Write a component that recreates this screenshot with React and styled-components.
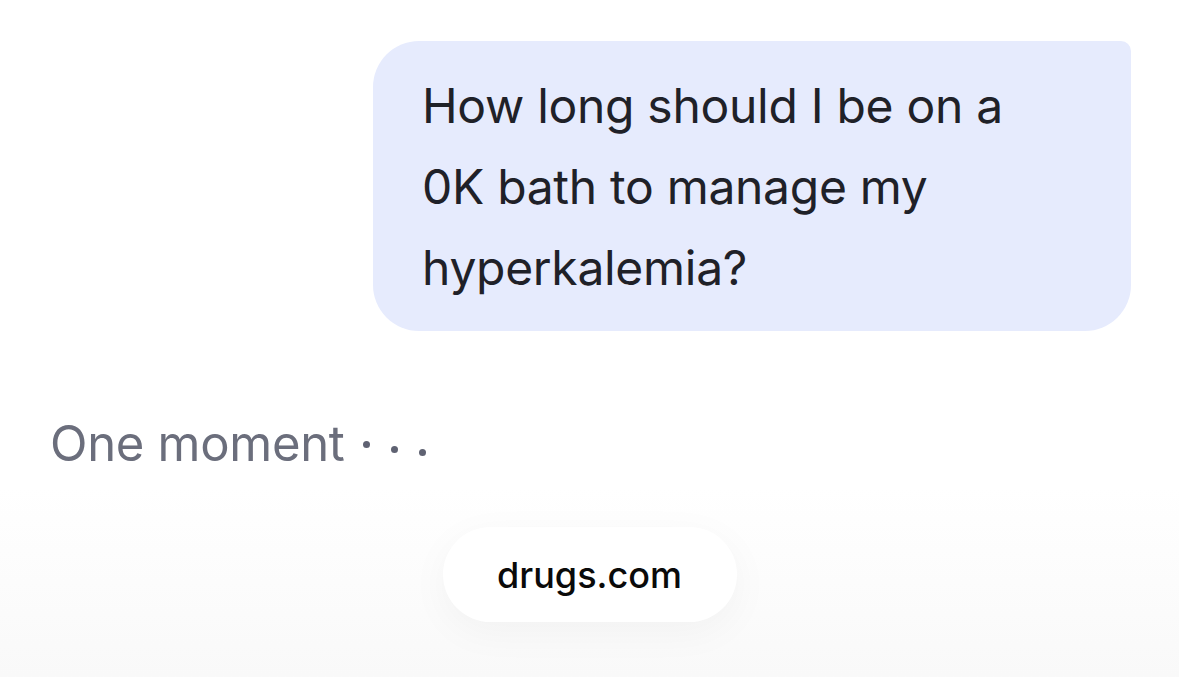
import React from 'react';
import styled, { createGlobalStyle } from 'styled-components';

const GlobalStyle = createGlobalStyle`
  html, body {
    margin: 0;
    padding: 0;
    background: #ffffff;
  }
  body {
    font-family: Inter, "Noto Sans", sans-serif;
  }
`;

const App = () => {
  return (
    <Page>
      <GlobalStyle />
      <Thread>
        <UserRow>
          <Bubble>How long should I be on a 0K bath to manage my hyperkalemia?</Bubble>
        </UserRow>
        <Pending>
          One moment
          <Dots>
            <Dot $shift={0} />
            <Dot $shift={5} />
            <Dot $shift={8} />
          </Dots>
        </Pending>
      </Thread>
      <Footer>
        <SourcePill>drugs.com</SourcePill>
      </Footer>
    </Page>
  );
};

const Page = styled.main`
  width: 1179px;
  height: 677px;
  overflow: hidden;
  display: flex;
  flex-direction: column;
  background: linear-gradient(to bottom, #ffffff 0%, #ffffff 72%, #f9f9f9 100%);
`;

const Thread = styled.section`
  display: flex;
  flex-direction: column;
  padding: 41px 48px 0 50px;
`;

const UserRow = styled.div`
  display: flex;
  justify-content: flex-end;
`;

const Bubble = styled.div`
  width: 758px;
  box-sizing: border-box;
  padding: 24px 120px 23px 49px;
  background: #e6ebfd;
  border-radius: 46px 10px 46px 46px;
  color: #1f2128;
  font-size: 48px;
  line-height: 81px;
  letter-spacing: -0.3px;
`;

const Pending = styled.div`
  display: flex;
  align-items: center;
  margin-top: 83px;
  color: #6b6e7c;
  font-size: 49px;
  line-height: 60px;
  letter-spacing: -0.3px;
`;

const Dots = styled.span`
  display: flex;
  align-items: flex-start;
  gap: 21px;
  margin-left: 18px;
  height: 7px;
  margin-top: 0;
`;

const Dot = styled.span`
  width: 7px;
  height: 7px;
  border-radius: 50%;
  background: #5f6272;
  transform: translateY(${(p) => p.$shift}px);
`;

const Footer = styled.footer`
  display: flex;
  justify-content: center;
  margin-top: 53px;
`;

const SourcePill = styled.div`
  width: 294px;
  height: 95px;
  border-radius: 48px;
  background: #ffffff;
  box-shadow: 0 10px 40px rgba(0, 0, 0, 0.04);
  display: flex;
  align-items: center;
  justify-content: center;
  color: #0a0a0a;
  font-size: 36px;
  font-weight: 500;
`;

export default App;
